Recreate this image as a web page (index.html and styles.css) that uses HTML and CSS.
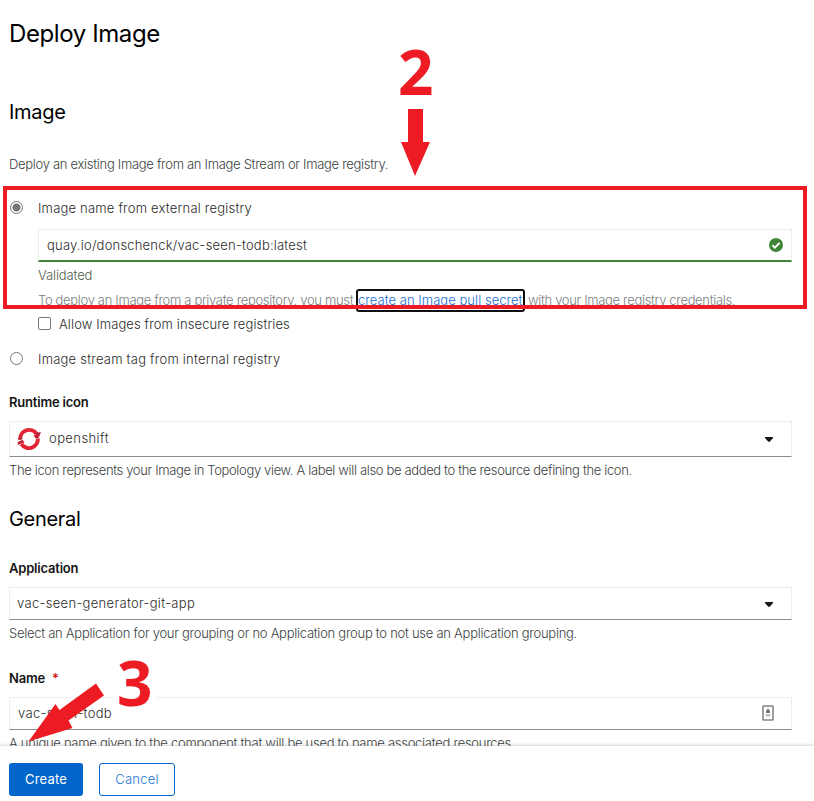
FILE: index.html
```html
<!DOCTYPE html>
<html lang="en">
<head>
<meta charset="utf-8">
<title>Deploy Image</title>
<link rel="stylesheet" href="styles.css">
</head>
<body>
<main class="page">
  <form class="form">
    <h1 class="title">Deploy Image</h1>
    <h2 class="heading heading-image">Image</h2>
    <p class="text intro">Deploy an existing Image from an Image Stream or Image registry.</p>

    <label class="option option-external"><span class="radio radio-on"></span><span>Image name from external registry</span></label>
    <div class="nested">
      <div class="field field-valid">
        <span>quay.io/donschenck/vac-seen-todb:latest</span>
        <svg class="check" viewBox="0 0 14 14"><circle cx="7" cy="7" r="7" fill="#3e8635"/><path d="M3.4 7.3 5.9 9.7 10.6 4.9" fill="none" stroke="#fff" stroke-width="2"/></svg>
      </div>
      <p class="text valid">Validated</p>
      <p class="text secret"><span class="secret-lead">To deploy an Image from a private repository, you must</span><a class="link">create an Image pull secret</a><span>with your Image registry credentials.</span></p>
      <label class="allow"><span class="checkbox"></span><span>Allow Images from insecure registries</span></label>
    </div>
    <label class="option option-internal"><span class="radio"></span><span>Image stream tag from internal registry</span></label>

    <div class="label label-runtime">Runtime icon</div>
    <div class="field field-icon">
      <svg class="openshift" viewBox="0 0 24 24">
        <g fill="none" stroke="#e22434" stroke-width="4"><path d="M3.200 12.500A9 8.800 0 0 1 19.600 6.800"/><path d="M20.800 11.500A9 8.800 0 0 1 4.400 17.200"/></g>
        <path fill="#e22434" d="m16.500 8.500 6.800-2.500-.6 3-4.400 2.200zM7.500 15.500.7 18l.6-3 4.400-2.200z"/>
        <path fill="#ad213a" d="m18.600 6.300 4.900-1.400.2 1.600-4.700 1.800zM18 10.200l3.700-1.300.5 1.700-3 .9zM.4 15.200l5.200-2 .2 1.500-5.100 1.900zM1.400 11.600l3.700-1 .2 1.300-3.800 1.300z"/>
      </svg>
      <span class="value value-up">openshift</span>
      <svg class="caret" viewBox="0 0 8 5"><path d="M0 0h8v1L4.700 4.700H3.300L0 1z" fill="#151515"/></svg>
    </div>
    <p class="text help help-icon">The icon represents your Image in Topology view. A label will also be added to the resource defining the icon.</p>

    <h2 class="heading heading-general">General</h2>
    <div class="label label-app">Application</div>
    <div class="field field-app">
      <span class="value value-up">vac-seen-generator-git-app</span>
      <svg class="caret" viewBox="0 0 8 5"><path d="M0 0h8v1L4.700 4.700H3.300L0 1z" fill="#151515"/></svg>
    </div>
    <p class="text help">Select an Application for your grouping or no Application group to not use an Application grouping.</p>
    <div class="label label-name">Name<span class="star">*</span></div>
    <div class="field field-name">
      <span class="value">vac-seen-todb</span>
      <svg class="contact" viewBox="0 0 12 16"><rect x="1" y="1" width="10" height="14" rx=".5" fill="#fff" stroke="#858585" stroke-width="1.6"/><path d="M6 3.200 8 6v2H4V6z" fill="#777"/><path d="M3.500 9.200h5v2.300h-5z" fill="#bbb"/></svg>
    </div>
    <p class="text help">A unique name given to the component that will be used to name associated resources.</p>
  </form>
  <footer class="actions">
    <button class="btn btn-primary" type="button">Create</button>
    <button class="btn btn-secondary" type="button">Cancel</button>
  </footer>
  <div class="highlight"></div>
  <div class="step step-two">2</div>
  <div class="step step-three">3</div>
  <svg class="arrows" viewBox="0 0 814 801"><path fill="#ed1c24" d="M408 109h15v33h7l-15 34-14-34h7zM96 683.500l8 12-35.500 25 4 7.500-44 13.500 27-37.500 4 6z"/></svg>
</main>
</body>
</html>
```
FILE: styles.css
```css
* { box-sizing: border-box; }
body { margin: 0; background: #fff; color: #2b2b2b; font: 300 13px/20px Inter, "Liberation Sans", sans-serif; letter-spacing: .2px; }
h1, h2, p { margin: 0; font-weight: 400; }
span, a, p { white-space: nowrap; }
.page { position: relative; width: 814px; height: 801px; overflow: hidden; display: flex; flex-direction: column; }
.form { height: 746px; overflow: hidden; padding: 18px 22px 0 9px; }
.title { font-size: 24px; line-height: 32px; letter-spacing: -.4px; color: #000; }
.heading { font-size: 20px; line-height: 26px; letter-spacing: -.3px; color: #000; }
.heading-image { margin-top: 49px; }
.text { color: #3c3f42; height: 20px; font-weight: 300; letter-spacing: -.27px; }
.intro { margin-top: 29px; letter-spacing: -.3px; }
.option { display: flex; align-items: center; height: 20px; gap: 15px; }
.option-external { margin-top: 24px; }
.option-internal { margin-top: 15px; letter-spacing: .22px; }
.radio { width: 13px; height: 13px; margin: -2px 0 0 1px; border: 1px solid #767676; border-radius: 50%; background: #fff; }
.radio-on { background: radial-gradient(circle, #767676 0 3.8px, #fff 4.3px); }
.nested { padding-left: 29px; }
.field { display: flex; align-items: center; border: 1px solid #ededed; border-bottom-color: #8a8d90; padding: 0 8px 0 7px; }
.field-valid { height: 33px; margin-top: 11px; border-bottom: 2px solid #3e8635; padding-left: 8px; }
.field-valid .check { width: 14px; height: 14px; margin-left: auto; }
.text.valid { margin-top: 3px; color: #52604b; letter-spacing: -.13px; }
.text.secret { display: flex; margin-top: 5px; color: #7c7f82; letter-spacing: -.33px; }
.secret-lead { width: 318px; }
.link { width: 169px; height: 23px; margin: -1px 3px 0 0; padding: 0; border: 2px solid #101010; border-radius: 3px; color: #1a6fd0; line-height: 18px; letter-spacing: .04px; }
.allow { display: flex; gap: 8px; align-items: center; height: 20px; margin-top: 4px; letter-spacing: .11px; }
.checkbox { width: 13px; height: 13px; margin-top: -2px; border: 1px solid #767676; border-radius: 2px; }
.label { font-weight: 600; color: #151515; height: 20px; letter-spacing: -.2px; }
.label-runtime { margin-top: 23px; }
.field-icon { height: 36px; margin-top: 9px; }
.openshift { width: 24px; height: 24px; margin-right: 8px; }
.value { letter-spacing: .32px; }
.field-icon .value { letter-spacing: .42px; }
.value-up { margin-top: -2px; }
.caret { width: 8px; height: 5px; margin: 1px 10px 0 auto; }
.help { margin-top: 3px; }
.help-icon { letter-spacing: -.35px; }
.heading-general { margin-top: 26px; }
.label-app { margin-top: 26px; }
.field-app { height: 33px; margin-top: 9px; }
.label-name { margin-top: 25px; }
.star { color: #c9190b; margin-left: 7px; }
.field-name { height: 33px; margin-top: 9px; padding-left: 8px; }
.field-name .value { margin-top: -1px; }
.contact { width: 12px; height: 16px; margin: -1px 9px 0 auto; }
.actions { position: relative; height: 55px; display: flex; gap: 16px; padding: 17px 9px 0; background: #fff; box-shadow: 0 -1px 3px rgba(3, 3, 3, .18); }
.btn { height: 33px; padding: 0 0 1px; border-radius: 3px; font: 400 13px/20px Inter, sans-serif; letter-spacing: .2px; text-align: center; }
.btn-primary { width: 74px; border: 0; background: #06c; color: #fff; }
.btn-secondary { width: 76px; border: 1px solid #06c; background: #fff; color: #2478d4; font-weight: 300; }
.highlight { position: absolute; left: 3px; top: 186px; width: 804px; height: 123px; border: 4px solid #ed1c24; }
.step { position: absolute; color: #ed1c24; font: 700 62px/64px "Noto Sans", sans-serif; letter-spacing: 0; }
.step-two { left: 398px; top: 39px; }
.step-three { left: 114px; top: 650px; width: 43px; padding-left: 3px; background: linear-gradient(#fff, #fff) 0 0 / 100% 60px no-repeat; }
.arrows { position: absolute; left: 0; top: 0; width: 814px; height: 801px; pointer-events: none; }
```
